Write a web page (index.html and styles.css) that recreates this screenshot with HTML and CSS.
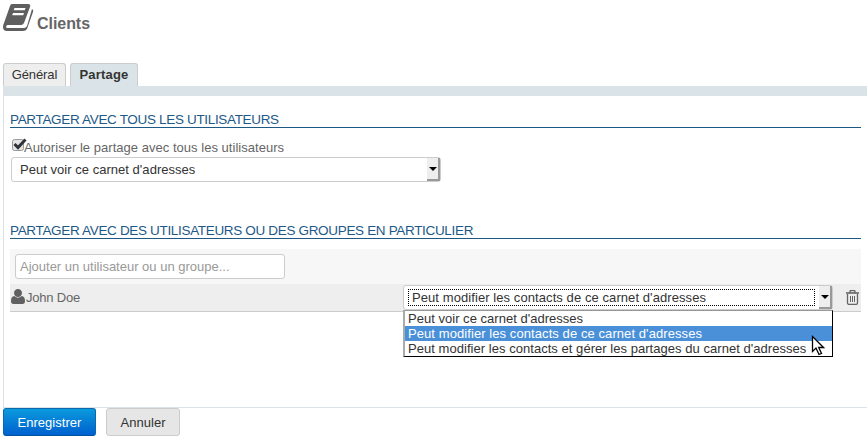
FILE: index.html
```html
<!DOCTYPE html>
<html lang="fr">
<head>
<meta charset="utf-8">
<title>Clients</title>
<link rel="stylesheet" href="styles.css">
</head>
<body>
<header class="page-head">
  <svg class="book" width="31" height="29" viewBox="0 0 31 29">
    <path fill="#5f5f5f" fill-rule="evenodd" d="M9 1H25Q28 1 27 4L21 20Q20 22 18 22H5Q3 22 3 24Q3 25 5 25H21Q23 25 24 23L29 6Q31 7 30 9L24 26Q23 28 20 28H4Q0 28 0 24Q0 22 1 20L7 3Q7.500 1 9 1ZM11.500 5L10.700 7.300H21.700L22.500 5ZM10 10L9.200 12.200H20.200L21 10Z"/>
  </svg>
  <h1>Clients</h1>
</header>
<nav class="tabs">
  <a class="tab general">Général</a>
  <a class="tab active">Partage</a>
</nav>
<main class="panel">
  <h2>PARTAGER AVEC TOUS LES UTILISATEURS</h2>
  <label class="allow">
    <svg width="16" height="15" viewBox="0 0 16 15">
      <rect x="1.500" y="2.500" width="11" height="11" rx="2" fill="#e4e4e4" stroke="#999"/>
      <path d="M3.500 7L7 10.500L14.500 2.500" fill="none" stroke="#30343a" stroke-width="3"/>
    </svg><span>Autoriser le partage avec tous les utilisateurs</span>
  </label>
  <div class="select global"><span class="value">Peut voir ce carnet d'adresses</span><span class="arrow"></span></div>
  <h2 class="second">PARTAGER AVEC DES UTILISATEURS OU DES GROUPES EN PARTICULIER</h2>
  <div class="add-row"><div class="input">Ajouter un utilisateur ou un groupe...</div></div>
  <div class="user-row">
    <svg class="user" width="14" height="15" viewBox="0 0 14 15">
      <path fill="#606060" d="M7 0C9.400 0 11 1.800 11 4S9.400 8 7 8S3 6.200 3 4S4.600 0 7 0ZM3.300 7Q7 10.500 10.700 7Q14 7.500 14 12Q14 15 11.500 15H2.500Q0 15 0 12Q0 7.500 3.300 7Z"/>
    </svg>
    <span class="name">John Doe</span>
    <div class="select personal">
      <span class="value focus">Peut modifier les contacts de ce carnet d'adresses</span><span class="arrow"></span>
      <ul class="menu">
        <li class="short">Peut voir ce carnet d'adresses</li>
        <li class="selected">Peut modifier les contacts de ce carnet d'adresses</li>
        <li class="long">Peut modifier les contacts et gérer les partages du carnet d'adresses</li>
      </ul>
      <svg class="cursor" width="14" height="21" viewBox="0 0 14 21">
        <path d="M1.500 1.500V16.500L5 13L8 19.500L10.500 18.500L7.700 12.500H12.500Z" fill="#fff" stroke="#000" stroke-width="1.300"/>
      </svg>
    </div>
    <svg class="trash" width="13" height="15" viewBox="0 0 13 15" fill="none" stroke="#666">
      <path d="M0 3H13" stroke-width="1.600"/>
      <path d="M4 3V1.500Q4 .5 5 .5H8Q9 .5 9 1.500V3M1.500 4V13Q1.500 14.400 3 14.400H10Q11.500 14.400 11.500 13V4" stroke-width="1.300"/>
      <path d="M4.500 6V12M6.500 6V12M8.500 6V12"/>
    </svg>
  </div>
</main>
<footer class="actions">
  <button class="save">Enregistrer</button>
  <button class="cancel">Annuler</button>
</footer>
</body>
</html>
```
FILE: styles.css
```css
* { box-sizing: border-box; }
body { margin: 0; height: 439px; overflow: hidden; background: #fff; color: #333; font: 13px/16px "Liberation Sans", sans-serif; letter-spacing: .03px; }
.page-head { height: 63px; padding: 3px 0 0 3px; display: flex; gap: 3px; }
.book { flex: none; }
h1 { margin: 12px 0 0; font-size: 16px; line-height: 18px; color: #666; letter-spacing: -.05px; }
.tabs { display: flex; gap: 4px; height: 23px; padding-left: 3px; }
.tab { border: 1px solid #ccc; border-bottom: 0; border-radius: 3px 3px 0 0; background: #eee; width: 63px; text-align: center; line-height: 22px; }
.tab.general { letter-spacing: -.1px; }
.tab.active { width: 68px; background: #dae3e7; font-weight: bold; color: #333; letter-spacing: .2px; }
.panel { margin-left: 3px; height: 322px; border-top: 10px solid #dae3e7; border-left: 1px solid #dae3e7; border-bottom: 1px solid #dae3e7; padding: 14px 6px 0; }
h2 { margin: 0; height: 18px; border-bottom: 1px solid #1d5987; color: #1d5987; font-size: 13.5px; font-weight: normal; line-height: 20px; letter-spacing: -.33px; white-space: nowrap; }
.allow { display: flex; height: 29px; padding: 9px 0 0 1px; color: #666; }
.allow svg { flex: none; margin-right: -3px; }
.allow span { line-height: 21px; }
.select { position: relative; display: flex; border: 1px solid #ccc; border-radius: 3px; background: #fff; white-space: nowrap; }
.global { width: 430px; height: 25px; margin-left: 1px; }
.global .value { flex: 1; padding-left: 8px; line-height: 23px; }
.arrow { width: 13px; flex: none; background: #eee; border-right: 2px solid #999; border-bottom: 2px solid #999; display: flex; justify-content: center; align-items: center; }
.arrow::after { content: ""; border: 4px solid transparent; border-top: 4px solid #000; border-bottom: 0; }
.second { margin-top: 39px; }
.add-row { margin-top: 10px; height: 35px; padding: 5px; background: #f7f7f7; }
.input { width: 270px; height: 25px; border: 1px solid #ccc; border-radius: 3px; background: #fff; color: #999; padding-left: 4px; line-height: 23px; letter-spacing: 0; }
.user-row { display: flex; height: 28px; border-bottom: 1px solid #ccc; background: #eee; padding: 1px 1px 0; }
.user { flex: none; margin-top: 4px; }
.name { width: 378px; padding-left: 1px; color: #666; line-height: 25px; letter-spacing: -.2px; }
.personal { width: 430px; height: 25px; flex: none; letter-spacing: .08px; }
.focus { flex: 1; margin: 3px 4px 3px 4px; border: 1px dotted #000; padding-left: 3px; line-height: 16px; }
.menu { position: absolute; top: 24px; left: -1px; width: 430px; height: 47px; margin: 0; padding: 0; border: 1px solid #000; border-top-color: #999; border-left: 2px solid #aaa; background: #fff; list-style: none; }
.menu li { height: 15px; padding-left: 3px; line-height: 15px; }
.menu .short { letter-spacing: .02px; }
.menu .long { letter-spacing: .04px; }
.menu .selected { background: #4a90d9; color: #fff; }
.cursor { position: absolute; left: 407px; top: 49px; }
.trash { flex: none; margin: 5px 0 0 13px; }
.actions { display: flex; gap: 10px; padding-left: 3px; }
button { height: 28px; padding: 2px 0 0; border-radius: 3px; font: inherit; letter-spacing: inherit; }
.save { width: 93px; border: 1px solid #0869ad; border-bottom-color: #0450a0; background: linear-gradient(#0a9adc, #0060cf); color: #fff; }
.cancel { width: 74px; border: 1px solid #ccc; background: #e6e6e6; color: #333; }
```
